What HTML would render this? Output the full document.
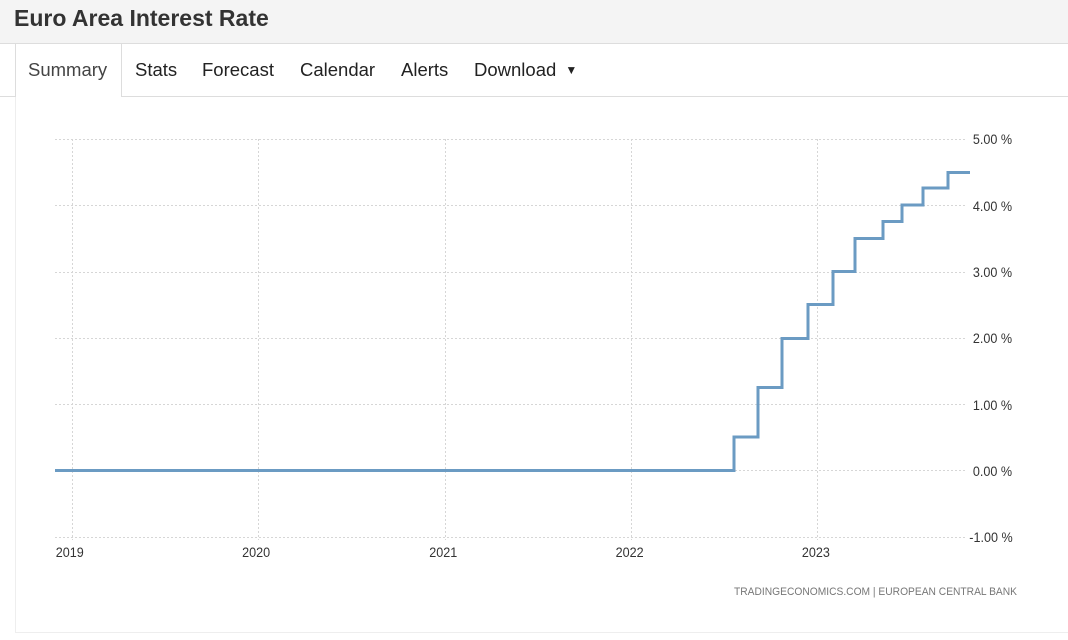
<!DOCTYPE html>
<html><head><meta charset="utf-8"><style>
body{margin:0;width:1068px;height:640px;background:#fff;font-family:"Liberation Sans",Arial,sans-serif;position:relative;overflow:hidden}
.hdr{position:absolute;left:0;top:0;width:1068px;height:43px;background:#f4f4f4;border-bottom:1px solid #ddd}
.hdr h1{margin:0;position:absolute;left:14px;top:5px;font-size:23px;font-weight:bold;color:#333}
.tabs{position:absolute;left:0;top:44px;width:1068px;height:52px;border-bottom:1px solid #ddd}
.tab{position:absolute;top:15px;font-size:18.5px;color:#222}
.act{position:absolute;left:15px;top:44px;width:105px;height:53px;background:#fff;border:1px solid #ddd;border-bottom:none;border-top:none}
.panel{position:absolute;left:15px;top:97px;width:1060px;height:535px;border-left:1px solid #eee;border-bottom:1px solid #eee}
svg{position:absolute;left:0;top:0}
svg text{font-family:"Liberation Sans",sans-serif;font-size:14px;fill:#333}
</style></head><body>
<div class="hdr"><h1>Euro Area Interest Rate</h1></div>
<div class="tabs"></div>
<div class="panel"></div>
<div class="act"></div>
<div class="tab" style="left:28px;top:59px;color:#444">Summary</div>
<div class="tab" style="left:135px;top:59px">Stats</div>
<div class="tab" style="left:202px;top:59px">Forecast</div>
<div class="tab" style="left:300px;top:59px">Calendar</div>
<div class="tab" style="left:401px;top:59px">Alerts</div>
<div class="tab" style="left:474px;top:59px">Download <span style="font-size:12px;position:relative;top:-2px;margin-left:4px">▼</span></div>
<svg width="1068" height="640">
<g stroke="#d6d6d6" stroke-dasharray="2,2" stroke-width="1">
<line x1="55" y1="139.5" x2="965" y2="139.5"/><line x1="55" y1="205.5" x2="965" y2="205.5"/>
<line x1="55" y1="272.5" x2="965" y2="272.5"/><line x1="55" y1="338.5" x2="965" y2="338.5"/>
<line x1="55" y1="404.5" x2="965" y2="404.5"/><line x1="55" y1="470.5" x2="965" y2="470.5"/>
<line x1="55" y1="537.5" x2="965" y2="537.5"/>
<line x1="72.5" y1="139" x2="72.5" y2="540"/><line x1="258.5" y1="139" x2="258.5" y2="540"/>
<line x1="445.5" y1="139" x2="445.5" y2="540"/><line x1="631.5" y1="139" x2="631.5" y2="540"/>
<line x1="817.5" y1="139" x2="817.5" y2="540"/>
</g>
<polyline fill="none" stroke="#6b9bc3" stroke-width="3" points="55,470.5 734,470.5 734,437 758,437 758,387.5 782,387.5 782,338.5 808,338.5 808,304.5 833,304.5 833,271.5 855,271.5 855,238.5 883,238.5 883,221.5 902,221.5 902,205 923,205 923,188 948,188 948,172.5 970,172.5"/>
<g transform="scale(0.9,1)">
<text x="1081" y="144">5.00 %</text><text x="1081" y="211">4.00 %</text><text x="1081" y="277">3.00 %</text>
<text x="1081" y="343">2.00 %</text><text x="1081" y="410">1.00 %</text><text x="1081" y="476">0.00 %</text>
<text x="1077" y="542">-1.00 %</text>
<text x="62" y="557">2019</text><text x="269" y="557">2020</text><text x="477" y="557">2021</text>
<text x="684" y="557">2022</text><text x="891" y="557">2023</text>
</g>
<text x="734" y="595" textLength="283" lengthAdjust="spacingAndGlyphs" style="font-size:11px;fill:#777">TRADINGECONOMICS.COM | EUROPEAN CENTRAL BANK</text>
</svg>
</body></html>
